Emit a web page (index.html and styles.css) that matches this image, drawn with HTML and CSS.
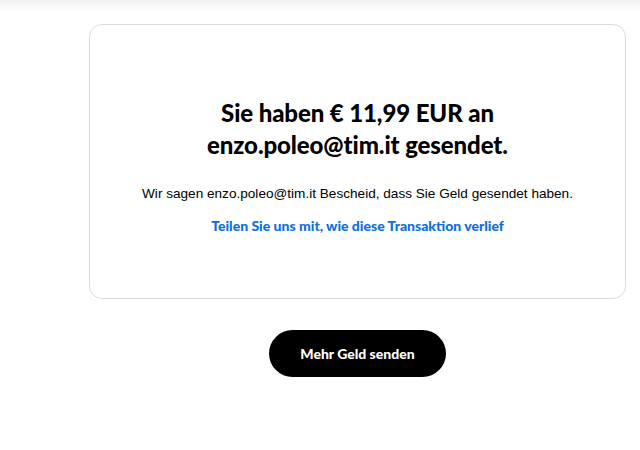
FILE: index.html
```html
<!DOCTYPE html>
<html lang="de">
<head>
<meta charset="utf-8">
<link rel="stylesheet" href="styles.css">
</head>
<body>
<div class="topshade"></div>
<main class="main">
  <section class="card">
    <h1 class="title">Sie haben € 11,99 EUR an<br>enzo.poleo@tim.it gesendet.</h1>
    <p class="note">Wir sagen enzo.poleo@tim.it Bescheid, dass Sie Geld gesendet haben.</p>
    <a class="link" href="#">Teilen Sie uns mit, wie diese Transaktion verlief</a>
  </section>
  <div class="actions">
    <button class="btn">Mehr Geld senden</button>
  </div>
</main>
</body>
</html>
```
FILE: styles.css
```css
html, body {
  margin: 0;
  padding: 0;
  background: #fff;
}
body {
  font-family: "Lato", "Liberation Sans", sans-serif;
  color: #000;
  position: relative;
  width: 640px;
  height: 450px;
  overflow: hidden;
}
.topshade {
  position: absolute;
  top: 0;
  left: 0;
  right: 0;
  height: 12px;
  background: linear-gradient(#f1f1f1, rgba(255,255,255,0));
}
.main {
  padding: 24px 14px 0 89px;
}
.card {
  box-sizing: border-box;
  height: 275px;
  border: 1px solid #dcdcdc;
  border-radius: 13px;
  display: flex;
  flex-direction: column;
  align-items: center;
  justify-content: center;
  text-align: center;
  padding-top: 8px;
}
.title {
  margin: 0;
  font-family: "Lato", sans-serif;
  font-weight: 900;
  font-size: 24px;
  line-height: 32px;
  letter-spacing: -0.1px;
}
.note {
  margin: 24px 0 0;
  font-family: "Liberation Sans", sans-serif;
  font-size: 13.6px;
  line-height: 18px;
  letter-spacing: 0;
}
.link {
  margin-top: 14px;
  font-family: "Lato", sans-serif;
  font-weight: 900;
  font-size: 14px;
  line-height: 18px;
  color: #0a6fe0;
  text-decoration: none;
  letter-spacing: 0;
}
.actions {
  display: flex;
  justify-content: center;
  margin-top: 31px;
}
.btn {
  width: 177px;
  height: 47px;
  border: none;
  border-radius: 24px;
  background: #000;
  color: #fff;
  font-family: "Lato", sans-serif;
  font-weight: 900;
  font-size: 14px;
  letter-spacing: 0;
  cursor: pointer;
}
```
